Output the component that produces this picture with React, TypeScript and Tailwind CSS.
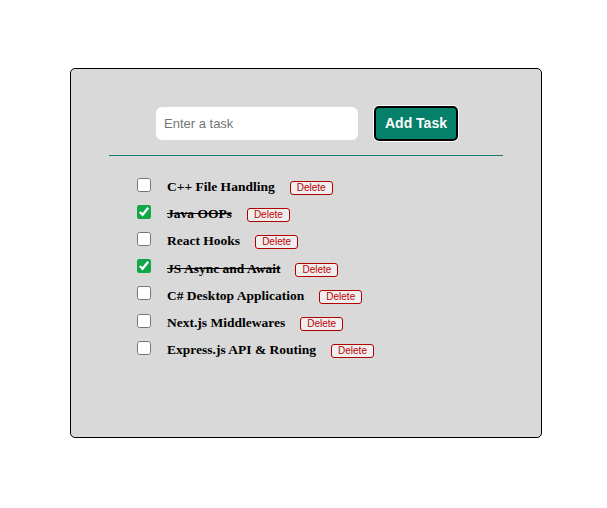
import React, { useState } from "react";

const initial = [
  { text: "C++ File Handling", done: false },
  { text: "Java OOPs", done: true },
  { text: "React Hooks", done: false },
  { text: "JS Async and Await", done: true },
  { text: "C# Desktop Application", done: false },
  { text: "Next.js Middlewares", done: false },
  { text: "Express.js API & Routing", done: false },
];

export default function App() {
  const [tasks, setTasks] = useState(initial);
  const [value, setValue] = useState("");
  return (
    <div className="min-h-[508px] bg-white pt-[68px] pl-[70px]">
      <div className="w-[472px] h-[370px] border border-black rounded-[5px] bg-[#d9d9d9] flex flex-col items-center pt-[37px]">
        <div className="flex items-center gap-[16px] ml-[2px]">
          <input
            value={value}
            onChange={(e) => setValue(e.target.value)}
            placeholder="Enter a task"
            className="w-[202px] h-[33px] bg-white rounded-[6px] px-[8px] text-[13px] text-[#333] placeholder:text-[#757575] outline-none font-['Liberation_Sans',Arial,sans-serif]"
          />
          <button
            onClick={() => {
              if (value.trim()) {
                setTasks([...tasks, { text: value, done: false }]);
                setValue("");
              }
            }}
            className="w-[84px] h-[35px] bg-[#05806a] border-2 border-black rounded-[5px] ring-1 ring-white text-white font-bold text-[14px] font-['Liberation_Sans',Arial,sans-serif]"
          >
            Add Task
          </button>
        </div>
        <div className="w-[394px] h-px bg-[#1d7a6c] mt-[14px] ml-[-1px]" />
        <ul className="self-start ml-[66px] mt-[17px] flex flex-col">
          {tasks.map((t, i) => (
            <li key={i} className="flex items-center h-[27.2px]">
              <input
                type="checkbox"
                checked={t.done}
                onChange={() =>
                  setTasks(tasks.map((x, j) => (j === i ? { ...x, done: !x.done } : x)))
                }
                className="w-[14px] h-[14px] m-0 -translate-y-[2px] accent-[#12a64b]"
              />
              <span
                className={
                  "ml-[16px] mt-[1px] text-[13.5px] font-bold text-black font-['Liberation_Serif','Times_New_Roman',serif] " +
                  (t.done ? "line-through" : "")
                }
              >
                {t.text}
              </span>
              <button
                onClick={() => setTasks(tasks.filter((_, j) => j !== i))}
                className="ml-[15px] mt-[3px] h-[14px] px-[6px] border border-[#b00000] rounded-[3px] bg-[#efefef] text-[#c00000] text-[10px] leading-none font-['Liberation_Sans',Arial,sans-serif]"
              >
                Delete
              </button>
            </li>
          ))}
        </ul>
      </div>
    </div>
  );
}
